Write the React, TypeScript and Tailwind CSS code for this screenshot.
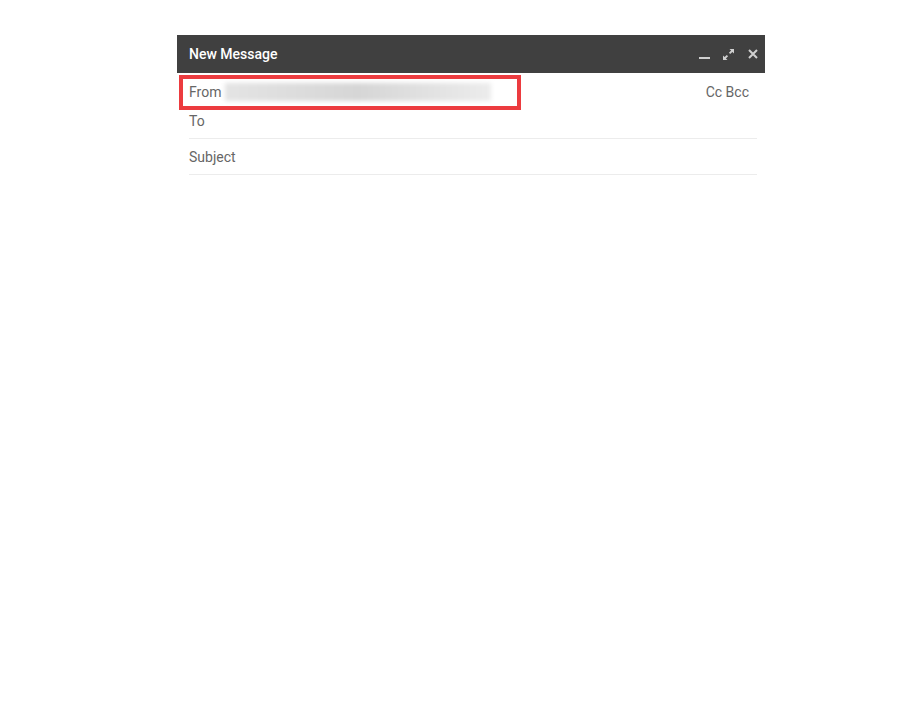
import React from 'react';

const font = { fontFamily: 'Roboto, "Liberation Sans", Arial, sans-serif' };

const ComposeHeader: React.FC = () => (
  <div className="flex h-[38px] items-center justify-between bg-[#404040] pl-[12px] pr-[7px]">
    <span className="text-[14px] font-medium text-white">New Message</span>
    <div className="flex items-center text-[#cfcfcf]">
      <svg width="11" height="11" viewBox="0 0 11 11" className="mr-[13px]">
        <rect x="0" y="8" width="11" height="2" fill="currentColor" />
      </svg>
      <svg width="11" height="11" viewBox="0 0 11 11" fill="currentColor" className="mr-[14px]">
        <path d="M6.5 0H11v4.5L9.4 2.9 7.2 5.1 5.9 3.8 8.1 1.6z" />
        <path d="M4.5 11H0V6.5l1.6 1.6 2.2-2.2 1.3 1.3-2.2 2.2z" />
      </svg>
      <svg width="10" height="10" viewBox="0 0 10 10">
        <path d="M1 1l8 8M9 1l-8 8" stroke="currentColor" strokeWidth="2" />
      </svg>
    </div>
  </div>
);

export default function App() {
  return (
    <div className="min-h-[716px] w-full bg-white pt-[35px]" style={font}>
      <div className="ml-[177px] w-[588px]">
        <ComposeHeader />
        <div className="relative bg-white">
          {/* annotation box */}
          <div className="pointer-events-none absolute left-[2px] top-[2px] h-[35px] w-[342px] border-[4px] border-[#ec3b3f]" />
          <div className="flex h-[31px] items-start justify-between pl-[12px] pr-[16px] pt-[9px] text-[14px] leading-[20px] text-[#666]">
            <div className="flex items-center">
              <span>From</span>
              <div className="ml-[4px] h-[18px] w-[266px] bg-gradient-to-r from-[#e4e4e4] via-[#d6d6d6] to-[#ececec] blur-[2px]" />
            </div>
            <span>Cc Bcc</span>
          </div>
          <div className="ml-[12px] mr-[8px] h-[35px] border-b border-[#ececec] pt-[7px] text-[14px] leading-[20px] text-[#666]">
            To
          </div>
          <div className="ml-[12px] mr-[8px] h-[36px] border-b border-[#ececec] pt-[8px] text-[14px] leading-[20px] text-[#666]">
            Subject
          </div>
        </div>
      </div>
    </div>
  );
}
